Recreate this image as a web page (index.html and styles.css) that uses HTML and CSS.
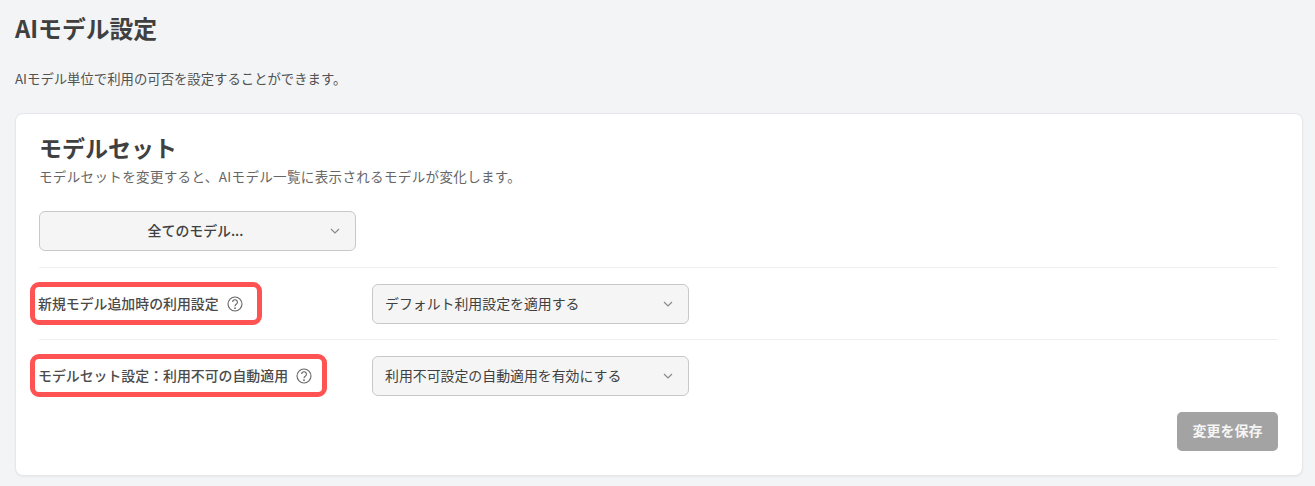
FILE: index.html
```html
<!DOCTYPE html>
<html lang="ja">
<head>
<meta charset="utf-8">
<title>AIモデル設定</title>
<link rel="stylesheet" href="styles.css">
</head>
<body>
<main class="page">
  <h1 class="page-title">AIモデル設定</h1>
  <p class="page-desc">AIモデル単位で利用の可否を設定することができます。</p>
  <section class="card">
    <h2 class="card-title">モデルセット</h2>
    <p class="card-desc">モデルセットを変更すると、AIモデル一覧に表示されるモデルが変化します。</p>
    <div class="select select-center">
      <span class="select-text">全てのモデル...</span>
      <svg class="chevron" viewBox="0 0 10 6"><path d="M1 1l4 4 4-4"/></svg>
    </div>
    <div class="row row-first">
      <div class="label-cell">
        <div class="label">
          <span>新規モデル追加時の利用設定</span>
          <svg class="help" viewBox="0 0 16 16"><circle cx="8" cy="8" r="7"/><path d="M5.6 6.1a2.4 2.4 0 1 1 3.6 2.1c-.8.5-1.2 1-1.2 2"/><circle class="dot" cx="8" cy="12.2" r=".85"/></svg>
        </div>
      </div>
      <div class="select">
        <span class="select-text">デフォルト利用設定を適用する</span>
        <svg class="chevron" viewBox="0 0 10 6"><path d="M1 1l4 4 4-4"/></svg>
      </div>
    </div>
    <div class="row">
      <div class="label-cell">
        <div class="label">
          <span>モデルセット設定：利用不可の自動適用</span>
          <svg class="help" viewBox="0 0 16 16"><circle cx="8" cy="8" r="7"/><path d="M5.6 6.1a2.4 2.4 0 1 1 3.6 2.1c-.8.5-1.2 1-1.2 2"/><circle class="dot" cx="8" cy="12.2" r=".85"/></svg>
        </div>
      </div>
      <div class="select">
        <span class="select-text">利用不可設定の自動適用を有効にする</span>
        <svg class="chevron" viewBox="0 0 10 6"><path d="M1 1l4 4 4-4"/></svg>
      </div>
    </div>
    <div class="actions">
      <button class="save" type="button">変更を保存</button>
    </div>
  </section>
</main>
</body>
</html>
```
FILE: styles.css
```css
* { box-sizing: border-box; }
html, body { margin: 0; height: 100%; }
body {
  background: #f3f4f6;
  color: #404040;
  font-family: "Noto Sans CJK JP", "Noto Sans", sans-serif;
  overflow: hidden;
}
.page { padding: 12px 12px 0 15px; }
.page-title {
  margin: 0;
  font-size: 23.8px;
  line-height: 32px;
  font-weight: 700;
}
.page-desc {
  margin: 24px 0 0;
  font-size: 13.37px;
  line-height: 20px;
  color: #525252;
}
.card {
  margin-top: 25px;
  height: 363px;
  padding: 18px 24px 0 23px;
  background: #fff;
  border: 1px solid #e5e7eb;
  border-radius: 8px;
  box-shadow: 0 1px 2px rgba(0,0,0,.05);
}
.card-title {
  margin: 0;
  font-size: 23px;
  line-height: 30px;
  font-weight: 700;
}
.card-desc {
  margin: 4px 0 0;
  font-size: 13.5px;
  line-height: 20px;
  letter-spacing: .36px;
  color: #666;
}
.select {
  flex: none;
  display: flex;
  align-items: center;
  width: 317px;
  height: 40px;
  padding: 0 13px 0 12px;
  background: #f5f5f5;
  border: 1px solid #c8c8c8;
  border-radius: 6px;
  font-size: 13.9px;
  color: #404040;
}
.select-center { margin-top: 25px; }
.select-text { flex: 1; min-width: 0; padding-bottom: 2px; }
.select-center .select-text { text-align: center; font-weight: 500; padding-left: 9px; }
.chevron {
  flex: none;
  width: 10px;
  height: 6px;
  margin-right: 2px;
  fill: none;
  stroke: #8a8a8a;
  stroke-width: 1.2;
}
.row {
  display: flex;
  align-items: center;
  height: 72px;
  border-top: 1px solid #f0f0f0;
}
.row-first { margin-top: 16px; }
.label-cell { flex: none; width: 333px; }
.label {
  display: inline-flex;
  align-items: center;
  gap: 8px;
  height: 43px;
  margin-left: -9px;
  padding: 0 10px 0 3px;
  border: 5px solid #ff5252;
  border-radius: 9px;
  font-size: 13.9px;
  font-weight: 500;
  color: #4a4a4a;
}
.label span { padding-bottom: 2px; }
.row-first .label { padding-right: 14px; }
.help {
  flex: none;
  width: 16px;
  height: 16px;
  fill: none;
  stroke: #666;
  stroke-width: 1.1;
}
.help .dot { fill: #666; stroke: none; }
.actions {
  display: flex;
  justify-content: flex-end;
  margin-top: 1px;
}
.save {
  width: 101px;
  height: 39px;
  padding: 0 0 3px;
  border: 0;
  border-radius: 5px;
  background: #a3a3a3;
  color: #f5f5f5;
  font: 700 14px "Noto Sans CJK JP", "Noto Sans", sans-serif;
}
```
